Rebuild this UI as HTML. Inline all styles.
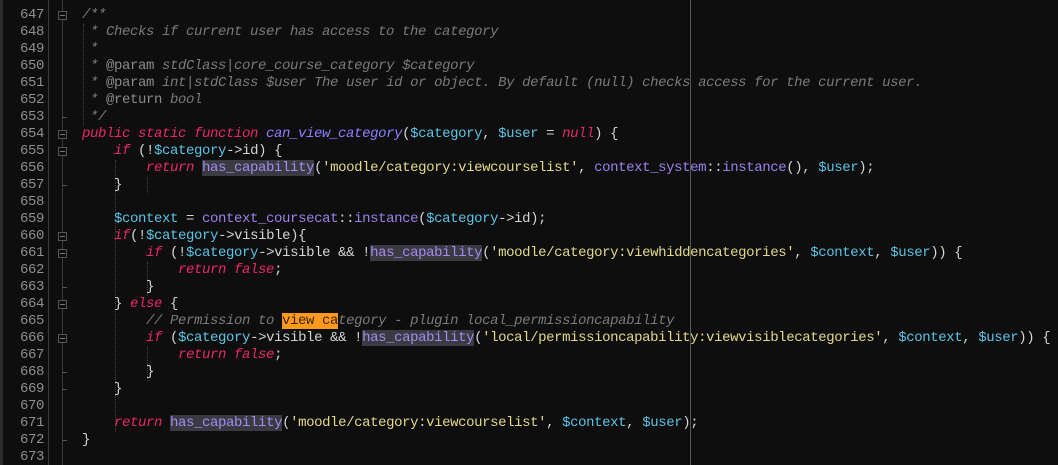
<!DOCTYPE html>
<html><head><meta charset="utf-8"><style>
html,body{margin:0;padding:0;background:#0e0e0e;width:1058px;height:465px;overflow:hidden}
body{position:relative;font-family:"Liberation Mono",monospace;font-size:14px;letter-spacing:-0.4px}
.strip{position:absolute;left:0;top:0;width:3px;height:465px;background:#2b2b2b}
.sep{position:absolute;left:48px;top:0;width:1px;height:465px;background:#3c3c3c}
.fold{position:absolute;left:62px;top:0;width:1px;height:465px;background:#3a3a3a}
.ruler{position:absolute;left:690px;top:0;width:1px;height:465px;background:#555}
.nums{position:absolute;left:0;top:7px;width:44px;text-align:right;color:#8e8e8e;line-height:17px;white-space:pre}
.code{position:absolute;left:82px;top:7px;line-height:17px;white-space:pre;color:#d4d4d4}
.box{position:absolute;left:58px;width:7px;height:7px;border:1px solid #555;background:#0e0e0e}
.box:after{content:"";position:absolute;left:1px;top:3px;width:5px;height:1px;background:#777}
.tick{position:absolute;left:62px;width:5px;height:1px;background:#555}
.g{position:absolute;width:0;border-left:1px dotted #444}
.c{color:#7a7a7a;font-style:italic}
.ca{color:#8a8a8a}
.k{color:#e8286a;font-style:italic}
.f{color:#8e7fff;font-style:italic}
.v{color:#5cc4e6}
.s{color:#e2d98a}
.p{color:#9d82ea}
.h{color:#a58cf0;background:#3a3a42}
.o{background:#ff9a1e;color:#3a2400}
</style></head><body>
<div class="strip"></div><div class="sep"></div><div class="fold"></div><div class="ruler"></div>
<div class="g" style="left:83px;top:24px;height:102px"></div>
<div class="g" style="left:115px;top:160px;height:272px"></div>
<div class="g" style="left:147px;top:177px;height:17px"></div>
<div class="g" style="left:147px;top:262px;height:34px"></div>
<div class="g" style="left:147px;top:347px;height:34px"></div>
<div class="box" style="top:11px"></div>
<div class="tick" style="top:117px"></div>
<div class="box" style="top:130px"></div>
<div class="box" style="top:147px"></div>
<div class="tick" style="top:185px"></div>
<div class="box" style="top:232px"></div>
<div class="box" style="top:249px"></div>
<div class="tick" style="top:287px"></div>
<div class="box" style="top:300px"></div>
<div class="box" style="top:334px"></div>
<div class="tick" style="top:372px"></div>
<div class="tick" style="top:389px"></div>
<div class="tick" style="top:440px"></div>
<div class="nums">647
648
649
650
651
652
653
654
655
656
657
658
659
660
661
662
663
664
665
666
667
668
669
670
671
672
673</div>
<div class="code"><span class="c">/**</span>
<span class="c"> * Checks if current user has access to the category</span>
<span class="c"> *</span>
<span class="c"> * </span><span class="ca">@param</span><span class="c"> stdClass|core_course_category $category</span>
<span class="c"> * </span><span class="ca">@param</span><span class="c"> int|stdClass $user The user id or object. By default (null) checks access for the current user.</span>
<span class="c"> * </span><span class="ca">@return</span><span class="c"> bool</span>
<span class="c"> */</span>
<span class="k">public static function</span> <span class="f">can_view_category</span>(<span class="v">$category</span>, <span class="v">$user</span> = <span class="k">null</span>) {
    <span class="k">if</span> (!<span class="v">$category</span>-&gt;id) {
        <span class="k">return</span> <span class="h">has_capability</span>(<span class="s">'moodle/category:viewcourselist'</span>, <span class="p">context_system</span>::<span class="p">instance</span>(), <span class="v">$user</span>);
    }

    <span class="v">$context</span> = <span class="p">context_coursecat</span>::<span class="p">instance</span>(<span class="v">$category</span>-&gt;id);
    <span class="k">if</span>(!<span class="v">$category</span>-&gt;visible){
        <span class="k">if</span> (!<span class="v">$category</span>-&gt;visible &amp;&amp; !<span class="h">has_capability</span>(<span class="s">'moodle/category:viewhiddencategories'</span>, <span class="v">$context</span>, <span class="v">$user</span>)) {
            <span class="k">return false</span>;
        }
    } <span class="k">else</span> {
        <span class="c">// Permission to </span><span class="o">view ca</span><span class="c">tegory - plugin local_permissioncapability</span>
        <span class="k">if</span> (<span class="v">$category</span>-&gt;visible &amp;&amp; !<span class="h">has_capability</span>(<span class="s">'local/permissioncapability:viewvisiblecategories'</span>, <span class="v">$context</span>, <span class="v">$user</span>)) {
            <span class="k">return false</span>;
        }
    }

    <span class="k">return</span> <span class="h">has_capability</span>(<span class="s">'moodle/category:viewcourselist'</span>, <span class="v">$context</span>, <span class="v">$user</span>);
}
</div>
</body></html>
